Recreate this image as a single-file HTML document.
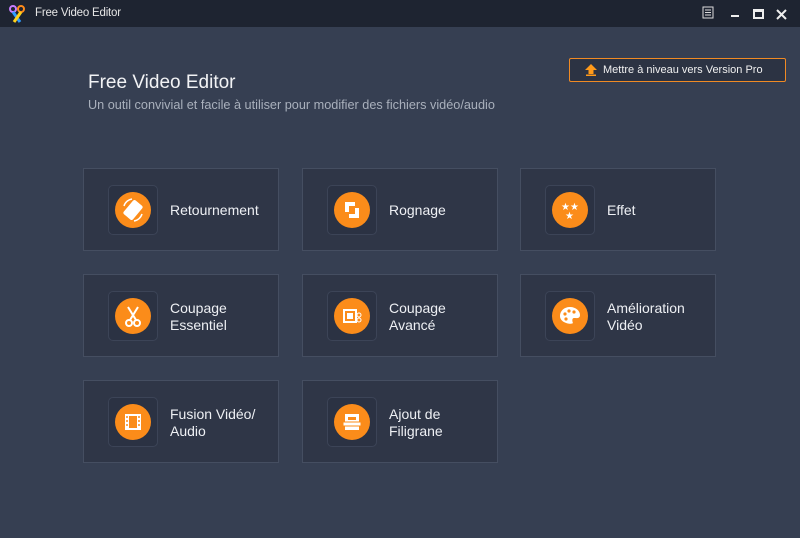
<!DOCTYPE html>
<html><head><meta charset="utf-8"><style>
*{margin:0;padding:0;box-sizing:border-box}
body{width:800px;height:538px;background:#363f52;font-family:"Liberation Sans",sans-serif;position:relative;overflow:hidden;color:#e8ebf0}
.tb{position:absolute;left:0;top:0;width:800px;height:27px;background:#1e2431}
.tb .t{position:absolute;left:35px;top:7px;font-size:11.5px;letter-spacing:-0.2px;color:#e6e6e6}
.card{position:absolute;width:196px;height:83px;background:#2f3647;border:1px solid #454e61}
.ib{position:absolute;left:24px;top:16px;width:50px;height:50px;border:1px solid #3c4457;border-radius:5px;background:#2b3243}
.ci{position:absolute;left:6px;top:6px;width:36px;height:36px;border-radius:50%;background:#fb8c1a}
.ci svg{position:absolute;left:0;top:0}
.lb{position:absolute;left:86px;font-size:14px;line-height:17px;color:#eef0f4}
</style></head><body>
<div class="tb">
<svg style="position:absolute;left:8px;top:5px" width="18" height="18" viewBox="0 0 18 18"><circle cx="5" cy="4" r="3" fill="none" stroke="#c77dff" stroke-width="2"/><circle cx="13" cy="4" r="3" fill="none" stroke="#ff8a1a" stroke-width="2"/><path d="M5 7 L12 17" stroke="#2f9bff" stroke-width="3"/><path d="M13 7 L6 17" stroke="#ffd21a" stroke-width="3"/></svg>
<div class="t">Free Video Editor</div>
<svg style="position:absolute;left:702px;top:6px" width="12" height="13"><rect x="1" y="1" width="10" height="11" fill="none" stroke="#ddd"/><path d="M3 4h6M3 6.5h6M3 9h6" stroke="#ddd"/></svg>
<div style="position:absolute;left:731px;top:15px;width:8px;height:2px;background:#eee"></div>
<div style="position:absolute;left:753px;top:9px;width:11px;height:10px;border:2px solid #eee;border-top-width:3px"></div>
<svg style="position:absolute;left:776px;top:9px" width="11" height="11"><path d="M1 1L10 10M10 1L1 10" stroke="#eee" stroke-width="2"/></svg>
</div>
<div style="position:absolute;left:88px;top:72px;font-size:19px;color:#f2f3f5">Free Video Editor</div>
<div style="position:absolute;left:88px;top:98px;font-size:12.7px;color:#a9b0bc">Un outil convivial et facile à utiliser pour modifier des fichiers vidéo/audio</div>
<div style="position:absolute;left:569px;top:58px;width:217px;height:24px;border:1px solid #f08a24;border-radius:2px;background:#2c3343">
<svg style="position:absolute;left:15px;top:5px" width="12" height="12"><path d="M6 0L12 6H8.5V10H3.5V6H0Z" fill="#ff9a1a"/><rect x="1" y="10.5" width="10" height="1.5" fill="#ff9a1a"/></svg>
<div style="position:absolute;left:33px;top:5px;font-size:11px;color:#f0f0f0">Mettre à niveau vers Version Pro</div></div>

<div class="card" style="left:83px;top:168px"><div class="ib"><div class="ci"><svg width="36" height="36"><rect x="12" y="9" width="12" height="18" rx="2" fill="#fff" transform="rotate(40 18 18)"/><path d="M9 14a10 10 0 0 1 8-7" stroke="#fff" stroke-width="1.5" fill="none"/><path d="M27 22a10 10 0 0 1-8 7" stroke="#fff" stroke-width="1.5" fill="none"/></svg></div></div><div class="lb" style="top:33px">Retournement</div></div>
<div class="card" style="left:302px;top:168px"><div class="ib"><div class="ci"><svg width="36" height="36"><path d="M11 10h10v4h-6v6h-4z M25 26H15v-4h6v-6h4z" fill="#fff"/></svg></div></div><div class="lb" style="top:33px">Rognage</div></div>
<div class="card" style="left:520px;top:168px"><div class="ib"><div class="ci"><svg width="36" height="36"><g fill="#fff"><text x="9" y="18" font-size="10">★</text><text x="18" y="18" font-size="10">★</text><text x="13" y="27" font-size="10">★</text></g></svg></div></div><div class="lb" style="top:33px">Effet</div></div>

<div class="card" style="left:83px;top:274px"><div class="ib"><div class="ci"><svg width="36" height="36"><path d="M13 9L21 22M23 9L15 22" stroke="#fff" stroke-width="2"/><circle cx="14" cy="25" r="3" fill="none" stroke="#fff" stroke-width="2"/><circle cx="22" cy="25" r="3" fill="none" stroke="#fff" stroke-width="2"/></svg></div></div><div class="lb" style="top:25px">Coupage<br>Essentiel</div></div>
<div class="card" style="left:302px;top:274px"><div class="ib"><div class="ci"><svg width="36" height="36"><rect x="9" y="11" width="14" height="14" fill="#fff"/><rect x="11" y="13" width="10" height="10" fill="#fb8c1a"/><rect x="13" y="15" width="6" height="6" fill="#fff"/><circle cx="25" cy="17" r="2" fill="none" stroke="#fff"/><circle cx="25" cy="22" r="2" fill="none" stroke="#fff"/></svg></div></div><div class="lb" style="top:25px">Coupage<br>Avancé</div></div>
<div class="card" style="left:520px;top:274px"><div class="ib"><div class="ci"><svg width="36" height="36"><path d="M18 9c6 0 10 4 10 8s-4 3-6 3-2 3-1 5c-2 2-13 0-13-7 0-5 4-9 10-9z" fill="#fff"/><circle cx="13" cy="16" r="1.6" fill="#fb8c1a"/><circle cx="17" cy="13" r="1.6" fill="#fb8c1a"/><circle cx="22" cy="14" r="1.6" fill="#fb8c1a"/><circle cx="14" cy="21" r="1.6" fill="#fb8c1a"/></svg></div></div><div class="lb" style="top:25px">Amélioration<br>Vidéo</div></div>

<div class="card" style="left:83px;top:380px"><div class="ib"><div class="ci"><svg width="36" height="36"><rect x="10" y="10" width="16" height="16" fill="#fff"/><rect x="14" y="12" width="8" height="12" fill="#fb8c1a"/><path d="M11 13h2M11 17h2M11 21h2M23 13h2M23 17h2M23 21h2" stroke="#fb8c1a" stroke-width="1.5"/></svg></div></div><div class="lb" style="top:25px">Fusion Vidéo/<br>Audio</div></div>
<div class="card" style="left:302px;top:380px"><div class="ib"><div class="ci"><svg width="36" height="36"><rect x="11" y="10" width="14" height="16" fill="#fff"/><rect x="14" y="13" width="8" height="3" fill="#fb8c1a"/><rect x="9" y="18" width="18" height="4" fill="#fff" stroke="#fb8c1a"/></svg></div></div><div class="lb" style="top:25px">Ajout de<br>Filigrane</div></div>
</body></html>
